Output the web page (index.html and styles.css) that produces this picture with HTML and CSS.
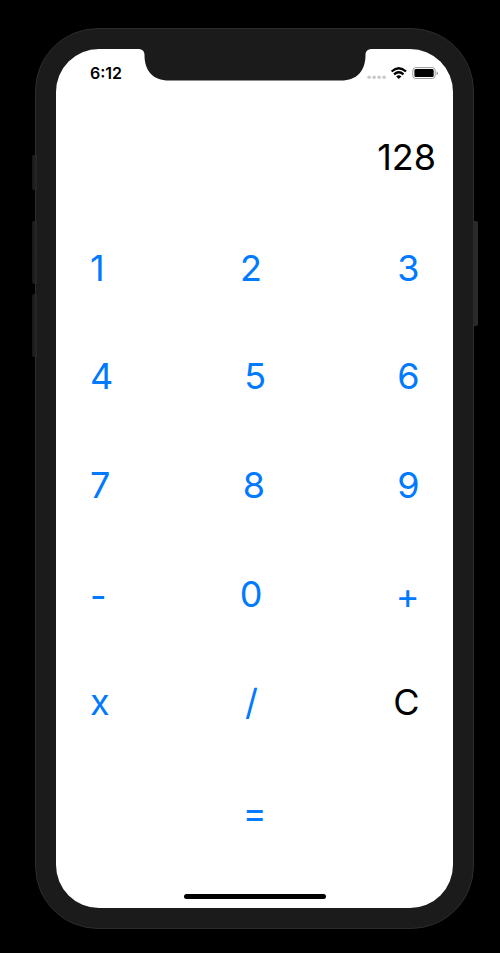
FILE: index.html
```html
<!DOCTYPE html>
<html lang="en">
<head>
<meta charset="utf-8">
<title>Calculator</title>
<link rel="stylesheet" href="styles.css">
</head>
<body>
<div class="phone">
  <span class="side-button mute"></span>
  <span class="side-button volume-up"></span>
  <span class="side-button volume-down"></span>
  <span class="side-button power"></span>
  <main class="screen">
    <header class="status-bar">
      <span class="time">6:12</span>
      <svg class="notch" width="234" height="32" viewBox="0 0 234 32"><path d="M0-1V0C4 0 6.500 2 6.500 6C6.500 22 15 31.500 31 31.500H203C219 31.500 227.500 22 227.500 6C227.500 2 230 0 234 0V-1Z" fill="#1b1b1b"/></svg>
      <svg class="indicators" width="73" height="16" viewBox="0 0 73 16">
        <g fill="#cacaca"><circle cx="3.100" cy="11.200" r="1.800"/><circle cx="8.100" cy="11.200" r="1.800"/><circle cx="13.100" cy="11.200" r="1.800"/><circle cx="18.100" cy="11.200" r="1.800"/></g>
        <g fill="none" stroke="#000" stroke-width="2.300"><path d="M25.600 5.500Q32.800-1 40 5.500"/><path d="M28.100 8.300Q32.800 4.100 37.500 8.300"/></g>
        <path d="M30.200 10.400Q32.800 8.200 35.400 10.400L32.800 13Z" fill="#000"/>
        <rect x="46.800" y="1.600" width="22.400" height="10.900" rx="3" fill="none" stroke="#999" stroke-width="1"/>
        <rect x="48.400" y="3.100" width="19.300" height="7.900" rx="1.500" fill="#000"/>
        <path d="M70.600 5.200Q72 5.800 72 7.200T70.600 9.200Z" fill="#999"/>
      </svg>
    </header>
    <output class="display">128</output>
    <section class="keypad">
      <div class="row"><button>1</button><button>2</button><button>3</button></div>
      <div class="row"><button>4</button><button>5</button><button>6</button></div>
      <div class="row"><button>7</button><button>8</button><button>9</button></div>
      <div class="row"><button class="low">-</button><button>0</button><button class="low">+</button></div>
      <div class="row"><button>x</button><button>/</button><button class="clear">C</button></div>
      <div class="row equals"><button class="low">=</button></div>
    </section>
    <div class="home-indicator"></div>
  </main>
</div>
</body>
</html>
```
FILE: styles.css
```css
* { box-sizing: border-box; }
body {
  margin: 0;
  height: 953px;
  padding: 28px 0 0 35px;
  background: #000;
  font-family: Inter, "Liberation Sans", sans-serif;
  overflow: hidden;
}
.phone {
  position: relative;
  width: 439px;
  height: 901px;
  padding: 20px;
  border: 1px solid #2c2c2c;
  border-radius: 63px;
  background: #1b1b1b;
}
.screen {
  display: flex;
  flex-direction: column;
  width: 397px;
  height: 859px;
  border-radius: 43px;
  background: #fff;
  overflow: hidden;
}
.side-button {
  position: absolute;
  width: 5px;
  background: linear-gradient(90deg, #171717, #292929);
  border-radius: 2px 0 0 2px;
}
.mute { left: -4px; top: 126px; height: 35px; }
.volume-up { left: -4px; top: 192px; height: 63px; }
.volume-down { left: -4px; top: 265px; height: 63px; }
.power {
  right: -5px;
  top: 192px;
  height: 105px;
  background: #2a2a2a;
  border-radius: 0 2px 2px 0;
}
.status-bar {
  display: flex;
  height: 48px;
  flex: none;
}
.time {
  width: 82px;
  padding: 14px 0 0 34px;
  font-size: 16px;
  line-height: 20px;
  font-weight: 600;
}
.notch { flex: none; }
.indicators { flex: none; margin: 17px 0 0 -6px; }
.display {
  height: 116px;
  padding: 38px 17px 0 0;
  text-align: right;
  font-size: 36px;
  line-height: 44px;
}
.keypad {
  display: grid;
  grid-template-rows: repeat(6, 108.600px);
  padding: 0 33.500px 0 34px;
}
.row {
  display: flex;
  justify-content: space-between;
  align-items: center;
}
.row button {
  padding: 1px 0 0;
  border: 0;
  background: none;
  color: #007aff;
  font: inherit;
  font-size: 36px;
  line-height: 44px;
}
.row .clear { color: #000; }
.row .low { padding-top: 5px; }
.equals { justify-content: center; }
.home-indicator {
  width: 142px;
  height: 5px;
  margin: 29px auto 0;
  border-radius: 3px;
  background: #000;
}
```
